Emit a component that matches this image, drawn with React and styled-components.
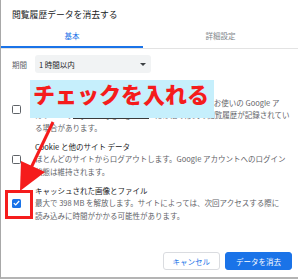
import React from 'react'
import styled, { createGlobalStyle } from 'styled-components'

const GlobalStyle = createGlobalStyle`
  html, body {
    margin:0;
    padding:0;
    background:#fff;
  }
  body {
    font-family:"Noto Sans CJK JP","Noto Sans",sans-serif;
  }
`;

const items = [
    {
        checked: false,
        lines: [
            { text: '閲覧履歴', title: true },
            { text: 'ログインしているデバイスを含む履歴を削除します。お使いの Google ア' },
            { text: 'カウントの myactivity.google.com には他の形式の閲覧履歴が記録されてい' },
            { text: 'る場合があります。' },
        ],
    },
    {
        checked: false,
        lines: [
            { text: 'Cookie と他のサイト データ', title: true },
            { text: 'ほとんどのサイトからログアウトします。Google アカウントへのログイン' },
            { text: '状態は維持されます。' },
        ],
    },
    {
        checked: true,
        lines: [
            { text: 'キャッシュされた画像とファイル', title: true },
            { text: '最大で 398 MB を解放します。サイトによっては、次回アクセスする際に' },
            { text: '読み込みに時間がかかる可能性があります。' },
        ],
    },
];

function App() {
    return (
        <>
            <GlobalStyle />
            <Dialog>
                <Title>閲覧履歴データを消去する</Title>
                <TabBar>
                    <Tab $active>基本</Tab>
                    <Tab>詳細設定</Tab>
                </TabBar>
                <PeriodRow>
                    <Label>期間</Label>
                    <Select>
                        <span>1 時間以内</span>
                        <Caret />
                    </Select>
                </PeriodRow>
                <List>
                    {items.map((item, i) => (
                        <Item key={i}>
                            <Check $checked={item.checked}>
                                {item.checked && (
                                    <svg width="7" height="6" viewBox="0 0 7 6">
                                        <path d="M0.8 3.1 L2.7 4.9 L6.2 1" fill="none" stroke="#fff" strokeWidth="1.3" />
                                    </svg>
                                )}
                            </Check>
                            <Texts>
                                {item.lines.map((l, j) => (
                                    <Line key={j} $title={l.title}>{l.text}</Line>
                                ))}
                            </Texts>
                        </Item>
                    ))}
                </List>
                <Footer>
                    <Button>キャンセル</Button>
                    <Button $primary>データを消去</Button>
                </Footer>

                <Callout>
                    <CalloutText>チェックを入れる</CalloutText>
                </Callout>
                <Smudge />
                <Highlight />
                <Arrow width="300" height="280" viewBox="0 0 300 280">
                    <line x1="53" y1="122" x2="30" y2="170" stroke="#f51c1c" strokeWidth="3" />
                    <polygon points="20,191 21,161 45,172" fill="#f51c1c" />
                </Arrow>
            </Dialog>
        </>
    )
}

const Dialog = styled.div`
    position:relative;
    width:297px;
    height:277px;
    border-left:1px solid #a8a8a8;
    border-bottom:2px solid #b4b4b4;
    display:flex;
    flex-direction:column;
    overflow:hidden;
    background:#fff;
`;

const Title = styled.h1`
    margin:0;
    padding:9px 0 3px 11px;
    font-size:8.8px;
    line-height:12px;
    font-weight:400;
    color:#202124;
`;

const TabBar = styled.div`
    display:flex;
    height:24px;
    border-bottom:1px solid #e3e3e3;
`;

const Tab = styled.div`
    box-sizing:border-box;
    width:${(p) => (p.$active ? '142px' : 'auto')};
    flex:${(p) => (p.$active ? 'none' : '1')};
    display:flex;
    align-items:center;
    justify-content:center;
    font-size:7.5px;
    color:${(p) => (p.$active ? '#1a73e8' : '#80868b')};
    border-bottom:2px solid ${(p) => (p.$active ? '#1a73e8' : 'transparent')};
`;

const PeriodRow = styled.div`
    display:flex;
    align-items:center;
    margin-top:6px;
    padding-left:11px;
`;

const Label = styled.span`
    width:23px;
    font-size:7.5px;
    color:#5f6368;
`;

const Select = styled.div`
    width:116px;
    height:18px;
    box-sizing:border-box;
    padding:0 5px 0 4px;
    display:flex;
    align-items:center;
    justify-content:space-between;
    background:#f1f3f4;
    border-radius:3px;
    font-size:7.5px;
    color:#202124;
`;

const Caret = styled.span`
    width:0;
    height:0;
    border-left:3px solid transparent;
    border-right:3px solid transparent;
    border-top:3px solid #3c4043;
`;

const List = styled.div`
    display:flex;
    flex-direction:column;
    gap:6.5px;
    margin-top:11px;
`;

const Item = styled.div`
    display:flex;
    align-items:center;
    padding-left:11px;
`;

const Check = styled.div`
    box-sizing:border-box;
    width:9px;
    height:9px;
    margin-right:14px;
    flex:none;
    border-radius:1.5px;
    display:flex;
    align-items:center;
    justify-content:center;
    border:${(p) => (p.$checked ? 'none' : '1.3px solid #5f6368')};
    background:${(p) => (p.$checked ? '#1a73e8' : '#fff')};
`;

const Texts = styled.div`
    display:flex;
    flex-direction:column;
`;

const Line = styled.div`
    white-space:nowrap;
    font-size:7.5px;
    line-height:12.5px;
    color:${(p) => (p.$title ? '#202124' : '#5f6368')};
`;

const Footer = styled.div`
    margin-top:auto;
    display:flex;
    justify-content:flex-end;
    gap:5px;
    padding:0 6px 7px 0;
`;

const Button = styled.div`
    box-sizing:border-box;
    height:18px;
    padding:0 ${(p) => (p.$primary ? '10px' : '9px')};
    display:flex;
    align-items:center;
    border-radius:3px;
    font-size:7.5px;
    background:${(p) => (p.$primary ? '#1a73e8' : '#fff')};
    color:${(p) => (p.$primary ? '#fff' : '#1a73e8')};
    border:1px solid ${(p) => (p.$primary ? '#1a73e8' : '#dadce0')};
`;

/* annotation layer pasted over the screenshot */
const Callout = styled.div`
    position:absolute;
    left:29px;
    top:80px;
    width:184px;
    height:38px;
    background:#c6effc;
`;

const CalloutText = styled.div`
    padding:2px 0 0 3px;
    font-size:22px;
    line-height:22px;
    font-weight:900;
    color:#f51c1c;
    white-space:nowrap;
`;

const Smudge = styled.div`
    position:absolute;
    left:72px;
    top:118px;
    width:76px;
    height:1px;
    background:#3a3a3a;
`;

const Highlight = styled.div`
    position:absolute;
    left:4px;
    top:190px;
    width:28px;
    height:29px;
    box-sizing:border-box;
    border:3px solid #f51c1c;
`;

const Arrow = styled.svg`
    position:absolute;
    left:-1px;
    top:0;
    pointer-events:none;
`;

export default App
